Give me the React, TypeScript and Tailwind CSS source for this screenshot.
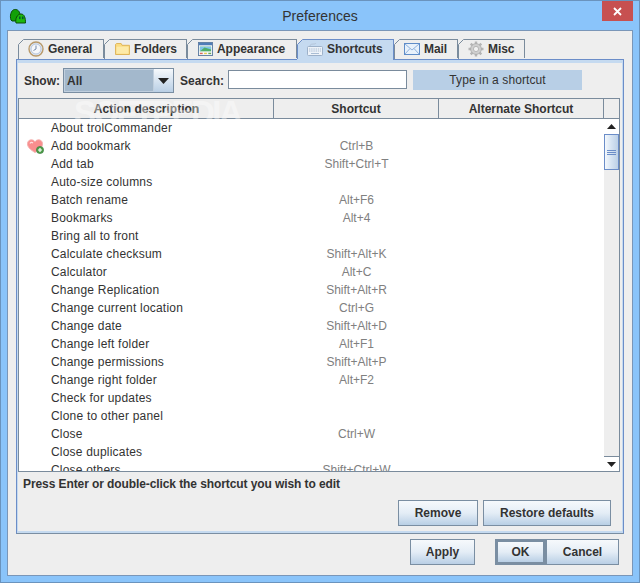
import React from "react";

const font = "font-['Liberation_Sans',Arial,sans-serif]";

const rows: [string, string][] = [
  ["About trolCommander", ""],
  ["Add bookmark", "Ctrl+B"],
  ["Add tab", "Shift+Ctrl+T"],
  ["Auto-size columns", ""],
  ["Batch rename", "Alt+F6"],
  ["Bookmarks", "Alt+4"],
  ["Bring all to front", ""],
  ["Calculate checksum", "Shift+Alt+K"],
  ["Calculator", "Alt+C"],
  ["Change Replication", "Shift+Alt+R"],
  ["Change current location", "Ctrl+G"],
  ["Change date", "Shift+Alt+D"],
  ["Change left folder", "Alt+F1"],
  ["Change permissions", "Shift+Alt+P"],
  ["Change right folder", "Alt+F2"],
  ["Check for updates", ""],
  ["Clone to other panel", ""],
  ["Close", "Ctrl+W"],
  ["Close duplicates", ""],
  ["Close others", "Shift+Ctrl+W"],
];

function Logo() {
  return (
    <svg width="18" height="18" viewBox="0 0 18 18">
      <path d="M2 13 C0.5 9 2 3 5.5 2.5 C9 2 11 5 11 8 L11 14 L3 14 Z" fill="#12a008" stroke="#0a4d06" strokeWidth="1" />
      <path d="M7 16 C6 12 8 7 12 7 C15.5 7 16.5 11 16.5 16 Z" fill="#1cb80e" stroke="#0a4d06" strokeWidth="1" />
      <rect x="10" y="9.5" width="1.5" height="2.6" fill="#053" />
      <rect x="13" y="9.5" width="1.5" height="2.6" fill="#053" />
    </svg>
  );
}

function ClockIcon() {
  return (
    <svg width="16" height="16" viewBox="0 0 16 16">
      <circle cx="8" cy="8" r="7" fill="#dfe6f2" stroke="#b8996a" strokeWidth="1.4" />
      <circle cx="8" cy="8" r="5" fill="#f5f7fb" stroke="#9fb3d0" strokeWidth="0.7" />
      <path d="M8 4.5 V8 L5.5 9.5" fill="none" stroke="#7288aa" strokeWidth="1" />
    </svg>
  );
}

function FolderIcon() {
  return (
    <svg width="15" height="12" viewBox="0 0 16 13">
      <path d="M0.5 1.5 V12.5 H15.5 V2.5 H7.5 L6.5 0.5 H1.5 Z" fill="#fbdc82" stroke="#dcb050" />
      <rect x="1.5" y="4" width="13" height="7.5" fill="#fdeaa8" />
    </svg>
  );
}

function AppearanceIcon() {
  return (
    <svg width="15" height="14" viewBox="0 0 16 15">
      <rect x="0.5" y="0.5" width="15" height="14" fill="#f4f6f8" stroke="#5d7ba0" />
      <rect x="1" y="1" width="14" height="2.5" fill="#4f7db8" />
      <rect x="2" y="5" width="12" height="5" fill="#4fae6a" />
      <path d="M2 10 L7 6 L14 8 V5 H2 Z" fill="#7fc5ea" />
      <rect x="2" y="11.5" width="3" height="1.5" fill="#d86a5a" />
      <rect x="6.5" y="11.5" width="3" height="1.5" fill="#e4c84e" />
      <rect x="11" y="11.5" width="3" height="1.5" fill="#6aa85a" />
    </svg>
  );
}

function KeyboardIcon() {
  return (
    <svg width="16" height="14" viewBox="0 0 16 14">
      <path d="M3 4 C3 1 8 3 9 1" fill="none" stroke="#b4c4d8" />
      <rect x="0.5" y="4.5" width="15" height="9" rx="1" fill="#eef3f9" stroke="#9db1c9" />
      <path d="M2 7 H14 M2 9 H14" stroke="#a9bdd4" strokeDasharray="1.4 0.8" />
      <path d="M4 11.5 H12" stroke="#a9bdd4" />
    </svg>
  );
}

function MailIcon() {
  return (
    <svg width="16" height="12" viewBox="0 0 16 12">
      <rect x="0.5" y="0.5" width="15" height="11" fill="#e8f1fb" stroke="#5f8cc8" />
      <path d="M1 1 L8 7 L15 1 M1 11 L6 5.5 M15 11 L10 5.5" fill="none" stroke="#8fb2de" />
    </svg>
  );
}

function GearIcon() {
  return (
    <svg width="16" height="16" viewBox="0 0 16 16">
      <g stroke="#b5b5b5" strokeWidth="2.4">
        <path d="M8 0.5 V15.5 M0.5 8 H15.5 M2.7 2.7 L13.3 13.3 M13.3 2.7 L2.7 13.3" />
      </g>
      <circle cx="8" cy="8" r="5.4" fill="#cfcfcf" stroke="#a5a5a5" strokeWidth="0.7" />
      <circle cx="8" cy="8" r="2.6" fill="#f2f2f2" stroke="#a5a5a5" strokeWidth="0.7" />
    </svg>
  );
}

function HeartIcon() {
  return (
    <svg width="17" height="15" viewBox="0 0 17 15">
      <path d="M8 13.5 C3 10.5 0.5 8 0.5 4.8 C0.5 2.2 2.4 0.8 4.4 0.8 C6 0.8 7.2 1.6 8 2.8 C8.8 1.6 10 0.8 11.6 0.8 C13.6 0.8 15.5 2.2 15.5 4.8 C15.5 8 13 10.5 8 13.5 Z" fill="#f98e8e" stroke="#f4b0ae" />
      <path d="M3 4.5 C3.5 3 5 3 6 4" fill="none" stroke="#fde0e0" strokeWidth="1.2" />
      <circle cx="13" cy="11" r="3.6" fill="#4f9e4a" stroke="#35773a" strokeWidth="0.6" />
      <path d="M13 9 V13 M11 11 H15" stroke="#fff" strokeWidth="1.2" />
    </svg>
  );
}

function Tab({ label, icon, width, active }: { label: string; icon: React.ReactNode; width: string; active?: boolean }) {
  return (
    <div
      className={`relative flex items-center gap-[4px] pl-[10px] font-bold tracking-[-0.05px] border-t border-r border-l-0 ${width} ${
        active
          ? "h-[21px] -mb-px z-10 pb-[2px] bg-[#c5daf0] border-[#6b8dc8]"
          : "h-[19px] bg-[#eeeeee] border-[#7a8b9c]"
      }`}
    >
      <svg className="absolute left-0 -top-px" width="6" height="20" viewBox="0 0 6 20">
        <path d="M0 0 H6 L0 6 Z" fill="#eeeeee" />
        <path d="M5.5 0.5 L0.5 5.5 V20" fill="none" stroke={active ? "#6b8dc8" : "#7a8b9c"} />
      </svg>
      <span className="flex w-[16px] shrink-0 justify-center">{icon}</span>
      <span>{label}</span>
    </div>
  );
}

function Btn({ label, width, strong }: { label: string; width: string; strong?: boolean }) {
  return (
    <button
      className={`h-[26px] ${width} font-bold text-[#333333] bg-gradient-to-b from-[#f6f9fc] via-[#e4edf6] to-[#b9cfe5] ${
        strong ? "border-[3px] border-[#7a8ea2]" : "border border-[#7a8ea2]"
      }`}
    >
      {label}
    </button>
  );
}

function HeaderCell({ label, width }: { label: string; width: string }) {
  return (
    <div className={`flex h-full items-center justify-center border-r border-[#7a8b9c] font-bold ${width}`}>{label}</div>
  );
}

function Arrow({ up }: { up?: boolean }) {
  return (
    <svg width="9" height="5" viewBox="0 0 9 5">
      <path d={up ? "M0 5 H9 L4.5 0 Z" : "M0 0 H9 L4.5 5 Z"} fill="#222222" />
    </svg>
  );
}

export default function App() {
  return (
    <div
      className={`${font} relative flex h-[583px] w-[640px] flex-col overflow-hidden border border-[#6a93bd] bg-[#8ac4fa] text-[12px] leading-none text-[#333333] antialiased`}
    >
      {/* title bar */}
      <div className="grid h-[29px] shrink-0 grid-cols-[1fr_auto_1fr] items-start">
        <div className="pl-[8px] pt-[6px]">
          <Logo />
        </div>
        <div className="pt-[8px] text-[14px] text-[#333]">Preferences</div>
        <div className="flex justify-end pr-[6px]">
          <div className="flex h-[20px] w-[31px] items-center justify-center bg-[#c75050]">
            <svg width="9" height="9" viewBox="0 0 9 9">
              <path d="M1 1 L8 8 M8 1 L1 8" stroke="#fff" strokeWidth="1.8" />
            </svg>
          </div>
        </div>
      </div>

      {/* content */}
      <div className="mx-[6px] flex h-[546px] flex-col border border-[#7a96b8] bg-[#eeeeee] pl-[8px] pr-[8px] pt-[8px]">
        {/* tabs */}
        <div className="flex pl-[2px]">
          <Tab label="General" icon={<ClockIcon />} width="w-[86px]" />
          <Tab label="Folders" icon={<FolderIcon />} width="w-[83px]" />
          <Tab label="Appearance" icon={<AppearanceIcon />} width="w-[110px]" />
          <Tab label="Shortcuts" icon={<KeyboardIcon />} width="w-[97px]" active />
          <Tab label="Mail" icon={<MailIcon />} width="w-[64px]" />
          <Tab label="Misc" icon={<GearIcon />} width="w-[67px]" />
        </div>

        {/* tab panel */}
        <div className="relative flex h-[475px] flex-col border border-t-[#6b8dc8] border-l-[#6b8dc8] border-r-[#6b8dc8] border-b-[#7a8ea2] bg-[#eeeeee]">
          <div className="flex h-full flex-col border-x border-t-[3px] border-b-[2px] border-[#c5daf0]">
            {/* toolbar */}
            <div className="flex h-[35px] shrink-0 items-start pl-[6px] pt-[5px]">
              <span className="mt-[7px] font-bold">Show:</span>
              <div className="ml-[3px] flex h-[25px] w-[111px] border border-[#7a8ea2]">
                <div className="flex flex-1 items-center border border-[#c0cfde] bg-[#a3b8cc] pl-[2px] font-bold">All</div>
                <div className="flex w-[19px] items-center justify-center bg-gradient-to-b from-[#f6f9fc] to-[#b9cfe5]">
                  <svg width="11" height="6" viewBox="0 0 11 6">
                    <path d="M0 0 H11 L5.5 6 Z" fill="#222" />
                  </svg>
                </div>
              </div>
              <span className="ml-[6px] mt-[7px] font-bold">Search:</span>
              <div className="ml-[4px] mt-[2px] h-[19px] w-[179px] border border-[#7a8b9c] bg-white" />
              <div className="ml-[6px] mt-[2px] flex h-[20px] w-[169px] items-center justify-center bg-[#b8cfe6] tracking-[0.1px] text-[#333]">
                Type in a shortcut
              </div>
            </div>

            {/* table */}
            <div className="mr-[2px] flex h-[374px] shrink-0 flex-col border border-[#7a8b9c]">
              <div className="flex h-[20px] shrink-0 border-b border-[#7a8b9c] bg-[#eeeeee] pl-px">
                <HeaderCell label="Action description" width="w-[254px]" />
                <HeaderCell label="Shortcut" width="w-[165px]" />
                <HeaderCell label="Alternate Shortcut" width="w-[165px]" />
              </div>
              <div className="flex min-h-0 flex-1">
                <div className="min-w-0 flex-1 overflow-hidden bg-white">
                  {rows.map(([name, key]) => (
                    <div key={name} className="flex h-[18px] items-center">
                      <div className="flex h-full w-[32px] shrink-0 items-center pl-[8px]">
                        {name === "Add bookmark" && <HeartIcon />}
                      </div>
                      <div className="w-[223px] shrink-0 tracking-[0.2px]">{name}</div>
                      <div className="w-[165px] shrink-0 text-center text-[#808080]">{key}</div>
                    </div>
                  ))}
                </div>
                <div className="flex w-[15px] shrink-0 flex-col bg-[#eeeeee]">
                  <div className="flex h-[15px] items-center justify-center bg-white">
                    <Arrow up />
                  </div>
                  <div className="flex h-[36px] flex-col items-center justify-center gap-px border border-[#6b8dc8] bg-gradient-to-r from-[#f4f8fc] via-[#d5e3f2] to-[#bcd0e6]">
                    <div className="h-px w-[9px] bg-[#6b8dc8]" />
                    <div className="h-px w-[9px] bg-[#6b8dc8]" />
                    <div className="h-px w-[9px] bg-[#6b8dc8]" />
                  </div>
                  <div className="flex-1" />
                  <div className="flex h-[15px] items-center justify-center border-t border-[#7a8b9c] bg-white">
                    <Arrow />
                  </div>
                </div>
              </div>
            </div>

            <div className="pl-[5px] pt-[6px] font-bold tracking-[-0.09px]">Press Enter or double-click the shortcut you wish to edit</div>

            <div className="mt-[10px] flex justify-end gap-[5px] pr-[11px]">
              <Btn label="Remove" width="w-[80px]" />
              <Btn label="Restore defaults" width="w-[128px]" />
            </div>
          </div>

          {/* watermark */}
          <div className="pointer-events-none absolute left-[57px] top-[36px] text-[33px] font-bold tracking-[-2.5px] text-white opacity-40">
            SOFTPEDIA
          </div>
        </div>

        {/* footer */}
        <div className="mt-[5px] flex justify-end pr-[5px]">
          <Btn label="Apply" width="w-[65px]" />
          <div className="ml-[20px] flex">
            <Btn label="OK" width="w-[51px]" strong />
            <Btn label="Cancel" width="w-[73px]" />
          </div>
        </div>
      </div>
    </div>
  );
}
